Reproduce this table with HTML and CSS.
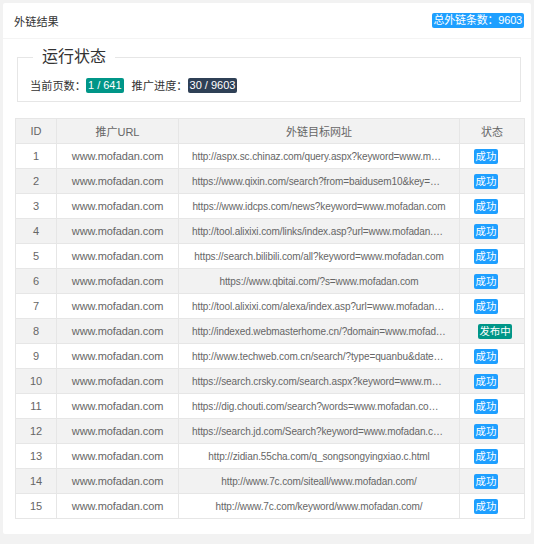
FILE: index.html
```html
<!DOCTYPE html>
<html lang="zh">
<head>
<meta charset="utf-8">
<title>外链结果</title>
<link rel="stylesheet" href="styles.css">
</head>
<body>
<div class="card">
  <div class="card-header">
    <span class="title">外链结果</span>
    <span class="badge badge-blue total">总外链条数：9603</span>
  </div>
  <div class="card-body">
    <fieldset class="status">
      <legend>运行状态</legend>
      <div class="status-row">
        <span>当前页数：</span><span class="badge badge-green">1 / 641</span>
        <span class="gap">推广进度：</span><span class="badge badge-dark">30 / 9603</span>
      </div>
    </fieldset>
    <table class="grid">
      <colgroup>
        <col class="c-id"><col class="c-url"><col class="c-target"><col class="c-state">
      </colgroup>
      <thead>
        <tr><th>ID</th><th>推广URL</th><th>外链目标网址</th><th>状态</th></tr>
      </thead>
      <tbody>
        <tr><td>1</td><td class="site">www.mofadan.com</td><td><div class="cell">http://aspx.sc.chinaz.com/query.aspx?keyword=www.mofadan.com</div></td><td class="state"><span class="badge badge-blue st">成功</span></td></tr>
        <tr><td>2</td><td class="site">www.mofadan.com</td><td><div class="cell">https://www.qixin.com/search?from=baidusem10&amp;key=www.mofadan.com</div></td><td class="state"><span class="badge badge-blue st">成功</span></td></tr>
        <tr><td>3</td><td class="site">www.mofadan.com</td><td><div class="cell">https://www.idcps.com/news?keyword=www.mofadan.com</div></td><td class="state"><span class="badge badge-blue st">成功</span></td></tr>
        <tr><td>4</td><td class="site">www.mofadan.com</td><td><div class="cell">http://tool.alixixi.com/links/index.asp?url=www.mofadan.com</div></td><td class="state"><span class="badge badge-blue st">成功</span></td></tr>
        <tr><td>5</td><td class="site">www.mofadan.com</td><td><div class="cell">https://search.bilibili.com/all?keyword=www.mofadan.com</div></td><td class="state"><span class="badge badge-blue st">成功</span></td></tr>
        <tr><td>6</td><td class="site">www.mofadan.com</td><td><div class="cell">https://www.qbitai.com/?s=www.mofadan.com</div></td><td class="state"><span class="badge badge-blue st">成功</span></td></tr>
        <tr><td>7</td><td class="site">www.mofadan.com</td><td><div class="cell">http://tool.alixixi.com/alexa/index.asp?url=www.mofadan.com</div></td><td class="state"><span class="badge badge-blue st">成功</span></td></tr>
        <tr><td>8</td><td class="site">www.mofadan.com</td><td><div class="cell">http://indexed.webmasterhome.cn/?domain=www.mofadan.com</div></td><td class="state"><span class="badge badge-green st pub">发布中</span></td></tr>
        <tr><td>9</td><td class="site">www.mofadan.com</td><td><div class="cell">http://www.techweb.com.cn/search/?type=quanbu&amp;date=all&amp;keyword=www.mofadan.com</div></td><td class="state"><span class="badge badge-blue st">成功</span></td></tr>
        <tr><td>10</td><td class="site">www.mofadan.com</td><td><div class="cell">https://search.crsky.com/search.aspx?keyword=www.mofadan.com</div></td><td class="state"><span class="badge badge-blue st">成功</span></td></tr>
        <tr><td>11</td><td class="site">www.mofadan.com</td><td><div class="cell">https://dig.chouti.com/search?words=www.mofadan.com&amp;linkType=ALL</div></td><td class="state"><span class="badge badge-blue st">成功</span></td></tr>
        <tr><td>12</td><td class="site">www.mofadan.com</td><td><div class="cell">https://search.jd.com/Search?keyword=www.mofadan.com&amp;enc=utf-8</div></td><td class="state"><span class="badge badge-blue st">成功</span></td></tr>
        <tr><td>13</td><td class="site">www.mofadan.com</td><td><div class="cell">http://zidian.55cha.com/q_songsongyingxiao.c.html</div></td><td class="state"><span class="badge badge-blue st">成功</span></td></tr>
        <tr><td>14</td><td class="site">www.mofadan.com</td><td><div class="cell">http://www.7c.com/siteall/www.mofadan.com/</div></td><td class="state"><span class="badge badge-blue st">成功</span></td></tr>
        <tr><td>15</td><td class="site">www.mofadan.com</td><td><div class="cell">http://www.7c.com/keyword/www.mofadan.com/</div></td><td class="state"><span class="badge badge-blue st">成功</span></td></tr>
      </tbody>
    </table>
  </div>
</div>
</body>
</html>
```
FILE: styles.css
```css
html, body {
  margin: 0;
  background: #f2f2f2;
}
body {
  padding: 3px;
  font-family: "Liberation Sans", Arial, "Noto Sans CJK SC", sans-serif;
  font-size: 11.2px;
  color: #666;
}
.card {
  width: 528px;
  height: 531px;
  background: #fff;
  border-radius: 2px;
  box-sizing: border-box;
}
.card-header {
  height: 35px;
  border-bottom: 1px solid #f4f4f4;
  display: flex;
  align-items: center;
  justify-content: space-between;
  padding: 0 7px 0 11px;
}
.title {
  color: #333;
}
.badge {
  display: inline-block;
  color: #fff;
  border-radius: 2px;
  font-size: 11px;
  line-height: 15px;
  height: 15px;
  padding: 0 2px;
  white-space: nowrap;
}
.badge-blue { background: #1e9fff; }
.badge-green { background: #009688; }
.badge-dark { background: #2f4056; }
.total {
  padding: 0 2px;
  letter-spacing: -0.2px;
}
.card-body {
  padding: 8px 7px 0 12px;
}
.status {
  margin: 0 3px 0 2px;
  border: 1px solid #e6e6e6;
  padding: 0 12px 6px;
}
.status legend {
  font-size: 16px;
  line-height: 20px;
  color: #333;
  padding: 0 9px;
  margin-left: 3px;
}
.status-row {
  display: flex;
  align-items: center;
  height: 20px;
  margin-top: 8px;
  color: #333;
}
.status-row .gap {
  margin-left: 8px;
}
.grid {
  margin-top: 16px;
  width: 509px;
  border-collapse: collapse;
  table-layout: fixed;
}
.c-id { width: 41px; }
.c-url { width: 122px; }
.c-target { width: 281px; }
.c-state { width: 65px; }
.grid th, .grid td {
  border: 1px solid #e6e6e6;
  height: 24px;
  padding: 0;
  text-align: center;
  font-weight: normal;
  font-size: 11px;
  color: #666;
  white-space: nowrap;
  overflow: hidden;
}
.grid td.site {
  letter-spacing: -0.1px;
}
.grid thead tr {
  background: #f2f2f2;
}
.grid tbody tr:nth-child(even) {
  background: #f2f2f2;
}
.cell {
  padding: 0 13px;
  font-size: 10px;
  letter-spacing: -0.1px;
  overflow: hidden;
  text-overflow: ellipsis;
  white-space: nowrap;
}
.grid td.state {
  padding-right: 12px;
}
.st {
  font-size: 10.4px;
  padding: 0 1.6px;
  vertical-align: middle;
}
.st.pub {
  margin-left: 14px;
  margin-right: -4px;
}
```
